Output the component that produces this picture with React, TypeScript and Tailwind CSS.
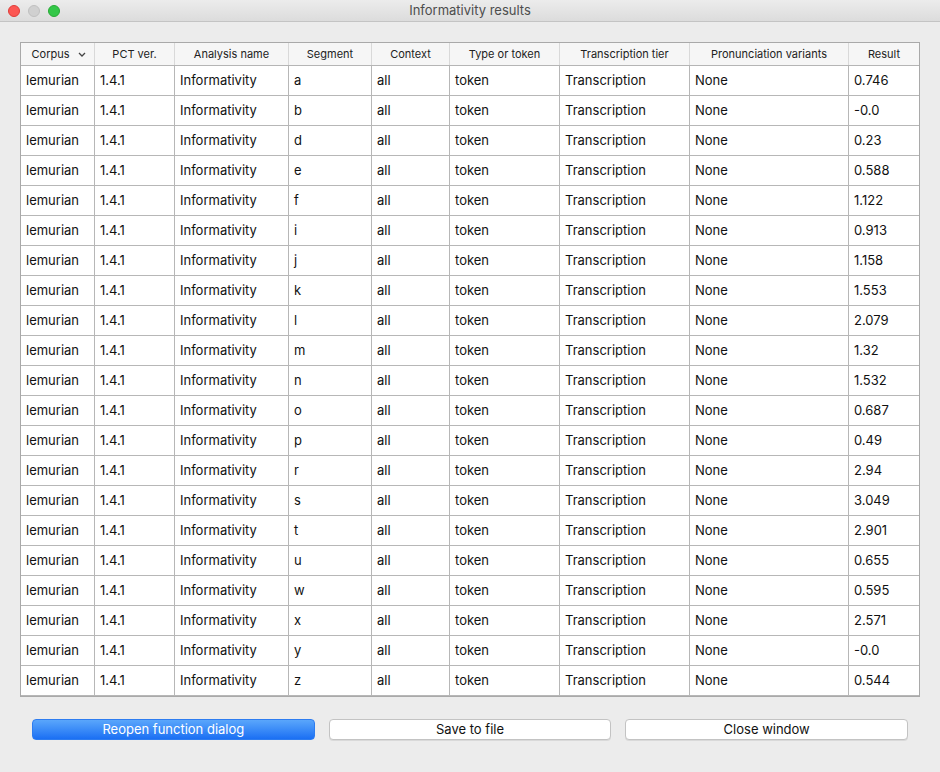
import React from "react";

const rows: [string, string][] = [
  ["a", "0.746"],
  ["b", "-0.0"],
  ["d", "0.23"],
  ["e", "0.588"],
  ["f", "1.122"],
  ["i", "0.913"],
  ["j", "1.158"],
  ["k", "1.553"],
  ["l", "2.079"],
  ["m", "1.32"],
  ["n", "1.532"],
  ["o", "0.687"],
  ["p", "0.49"],
  ["r", "2.94"],
  ["s", "3.049"],
  ["t", "2.901"],
  ["u", "0.655"],
  ["w", "0.595"],
  ["x", "2.571"],
  ["y", "-0.0"],
  ["z", "0.544"],
];

const headers = [
  "Corpus",
  "PCT ver.",
  "Analysis name",
  "Segment",
  "Context",
  "Type or token",
  "Transcription tier",
  "Pronunciation variants",
  "Result",
];

const grid =
  "grid grid-cols-[74px_80px_114px_83px_78px_110px_130px_159px_70px]";

export default function App() {
  return (
    <div
      className="w-[940px] h-[772px] bg-[#ececec] relative overflow-hidden"
      style={{ fontFamily: "Inter, 'Liberation Sans', sans-serif" }}
    >
      {/* Title bar */}
      <div className="h-[22px] bg-gradient-to-b from-[#ececec] to-[#dcdcdc] border-b border-[#c4c4c4] flex items-center relative">
        <div className="flex items-center gap-[8px] pl-[8px]">
          <div className="w-[12px] h-[12px] rounded-full bg-[#fc5753] border border-[#df3d39]" />
          <div className="w-[12px] h-[12px] rounded-full bg-[#d0d0d0] border border-[#c0c0c0]" />
          <div className="w-[12px] h-[12px] rounded-full bg-[#33c748] border border-[#27aa35]" />
        </div>
        <div className="absolute inset-0 flex items-center justify-center text-[13px] text-[#4d4d4d]">
          Informativity results
        </div>
      </div>

      {/* Table */}
      <div className="pl-[20px] pt-[20px]">
        <div className="w-[900px] border border-[#a9a9a9] bg-white text-[13px] text-[#111]">
          <div className={`${grid} h-[23px] bg-[#f6f6f6] border-b border-[#b5b5b5] text-[11px] text-[#222]`}>
            {headers.map((h, i) => (
              <div
                key={h}
                className={`relative flex items-center justify-center ${
                  i < 8 ? "border-r border-[#d9d9d9]" : ""
                }`}
              >
                {i === 0 ? (
                  <>
                    <span className="mr-[14px]">{h}</span>
                    <svg
                      className="absolute right-[8px] top-[9px]"
                      width="8"
                      height="5"
                      viewBox="0 0 8 5"
                    >
                      <path
                        d="M1 1 L4 4 L7 1"
                        fill="none"
                        stroke="#444"
                        strokeWidth="1.3"
                      />
                    </svg>
                  </>
                ) : (
                  h
                )}
              </div>
            ))}
          </div>
          {rows.map(([seg, res], r) => {
            const cells = [
              "lemurian",
              "1.4.1",
              "Informativity",
              seg,
              "all",
              "token",
              "Transcription",
              "None",
              res,
            ];
            return (
              <div
                key={r}
                className={`${grid} h-[30px] border-b border-[#b7b7b7]`}
              >
                {cells.map((c, i) => (
                  <div
                    key={i}
                    className={`flex items-center pl-[5px] ${
                      i < 8 ? "border-r border-[#b7b7b7]" : ""
                    }`}
                  >
                    {c}
                  </div>
                ))}
              </div>
            );
          })}
        </div>
      </div>

      {/* Buttons */}
      <div className="flex gap-[14px] pl-[32px] pr-[32px] pt-[22px] text-[13px]">
        <button className="w-[283px] h-[21px] rounded-[4px] bg-gradient-to-b from-[#5aa6fb] to-[#1a6ff3] border border-[#2d7cf0] text-white flex items-center justify-center">
          Reopen function dialog
        </button>
        <button className="w-[283px] h-[21px] rounded-[4px] bg-white border border-[#c3c3c3] shadow-[0_1px_0_rgba(0,0,0,0.08)] text-[#111] flex items-center justify-center">
          Save to file
        </button>
        <button className="w-[283px] h-[21px] rounded-[4px] bg-white border border-[#c3c3c3] shadow-[0_1px_0_rgba(0,0,0,0.08)] text-[#111] flex items-center justify-center">
          Close window
        </button>
      </div>
    </div>
  );
}
